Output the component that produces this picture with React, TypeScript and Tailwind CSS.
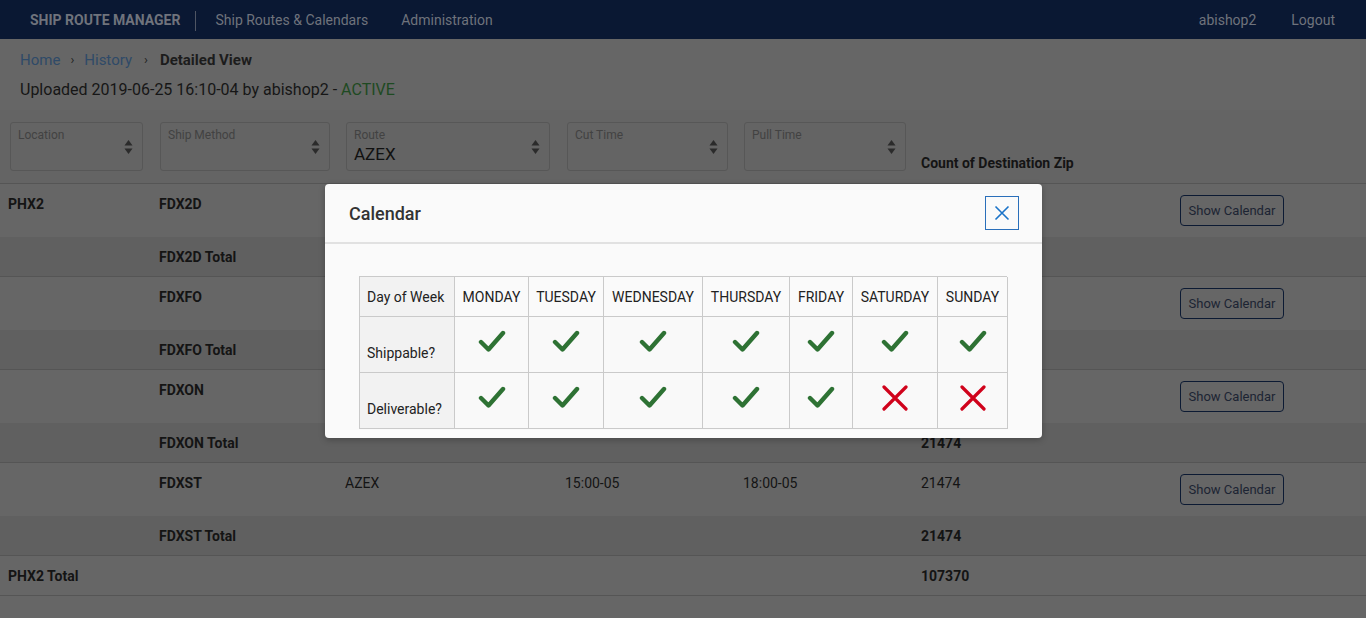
import React from "react";

const font = { fontFamily: "Roboto, 'Noto Sans', 'Liberation Sans', sans-serif" };

function UpDown() {
  return (
    <svg width="9" height="16" viewBox="0 0 9 16" className="shrink-0">
      <path d="M4.5 1 L8.5 6.5 L0.5 6.5 Z" fill="#2b2b2b" />
      <path d="M4.5 15 L8.5 9.5 L0.5 9.5 Z" fill="#2b2b2b" />
    </svg>
  );
}

function Check() {
  return (
    <svg width="28" height="23" viewBox="0 0 28 23">
      <path d="M3 12 L10.5 19.5 L25 3" fill="none" stroke="#2e7234" strokeWidth="4.4" strokeLinecap="round" strokeLinejoin="round" />
    </svg>
  );
}

function Cross() {
  return (
    <svg width="26" height="26" viewBox="0 0 26 26">
      <path d="M2 2 L24 24 M24 2 L2 24" fill="none" stroke="#d0021b" strokeWidth="3.2" strokeLinecap="round" />
    </svg>
  );
}

function Select({ label, value, w }: { label: string; value?: string; w: string }) {
  return (
    <div className={`${w} h-[49px] border border-[#575757] rounded-[3px] flex items-center pl-[7px] pr-[9px]`}>
      <div className="flex-1 flex flex-col self-stretch pt-[4px]">
        <span className="text-[12px] leading-[16px] text-[#424242]">{label}</span>
        {value && <span className="text-[17px] leading-[22px] text-[#111]">{value}</span>}
      </div>
      <UpDown />
    </div>
  );
}

function ShowBtn() {
  return (
    <button className="w-[104px] h-[31px] border border-[#0c1a33] rounded-[4px] text-[13px] text-[#1c2433] flex items-center justify-center">
      Show Calendar
    </button>
  );
}

type Group = { loc?: string; method: string; route?: string; cut?: string; pull?: string; count?: string; total: string };

const groups: Group[] = [
  { loc: "PHX2", method: "FDX2D", total: "" },
  { method: "FDXFO", total: "" },
  { method: "FDXON", total: "21474" },
  { method: "FDXST", route: "AZEX", cut: "15:00-05", pull: "18:00-05", count: "21474", total: "21474" },
];

const cols = "grid grid-cols-[151px_186px_220px_178px_178px_259px_1fr] pl-[8px]";

export default function App() {
  const days = ["MONDAY", "TUESDAY", "WEDNESDAY", "THURSDAY", "FRIDAY", "SATURDAY", "SUNDAY"];
  const ship = [true, true, true, true, true, true, true];
  const deliv = [true, true, true, true, true, false, false];
  return (
    <div style={font} className="relative min-h-screen w-full bg-[#666666] overflow-hidden">
      {/* Navbar */}
      <div className="h-[39px] bg-[#0a1833] flex items-center pt-[2px] px-[30px] text-[14px] text-[#6f737c]">
        <span className="font-bold">SHIP ROUTE MANAGER</span>
        <span className="w-px h-[20px] bg-[#4f5563] ml-[15px] mr-[19px]" />
        <span>Ship Routes &amp; Calendars</span>
        <span className="ml-[33px]">Administration</span>
        <span className="ml-auto">abishop2</span>
        <span className="ml-[35px] mr-[1px]">Logout</span>
      </div>

      {/* Header */}
      <div className="px-[20px] pt-[9px] pb-[8px]">
        <div className="flex items-center text-[15px] leading-[24px]">
          <span className="text-[#2f4a68]">Home</span>
          <span className="mx-[10px] text-[#222] text-[13px]">›</span>
          <span className="text-[#2f4a68]">History</span>
          <span className="mx-[12px] text-[#222] text-[13px]">›</span>
          <span className="font-bold text-[#1c1c1c]">Detailed View</span>
        </div>
        <div className="text-[16px] leading-[24px] mt-[6px] text-[#161616]">
          Uploaded 2019-06-25 16:10-04 by abishop2 - <span className="text-[#1e4a22]">ACTIVE</span>
        </div>
      </div>

      {/* Filter bar */}
      <div className="h-[74px] bg-[#646464] border-b border-[#555] flex items-start pl-[10px] pt-[12px]">
        <Select label="Location" w="w-[133px]" />
        <div className="w-[17px]" />
        <Select label="Ship Method" w="w-[170px]" />
        <div className="w-[16px]" />
        <Select label="Route" value="AZEX" w="w-[204px]" />
        <div className="w-[17px]" />
        <Select label="Cut Time" w="w-[161px]" />
        <div className="w-[16px]" />
        <Select label="Pull Time" w="w-[162px]" />
        <div className="ml-[15px] self-end mb-[10px] text-[14px] font-bold text-[#141414] leading-[20px]">
          Count of Destination Zip
        </div>
      </div>

      {/* Rows */}
      {groups.map((g) => (
        <div key={g.method} className="border-b border-[#555]">
          <div className={`${cols} h-[53px] text-[14px] leading-[20px] text-[#141414] pt-[10px]`}>
            <span className="font-bold">{g.loc ?? ""}</span>
            <span className="font-bold">{g.method}</span>
            <span>{g.route ?? ""}</span>
            <span>{g.cut ?? ""}</span>
            <span>{g.pull ?? ""}</span>
            <span>{g.count ?? ""}</span>
            <div className="mt-[1px]">
              <ShowBtn />
            </div>
          </div>
          <div className={`${cols} h-[39px] bg-[#606060] items-center text-[14px] leading-[20px] font-bold text-[#141414]`}>
            <span />
            <span>{g.method} Total</span>
            <span />
            <span />
            <span />
            <span>{g.total}</span>
            <span />
          </div>
        </div>
      ))}
      <div className="border-b border-[#555]">
        <div className={`${cols} h-[39px] items-center text-[14px] leading-[20px] font-bold text-[#141414]`}>
          <span>PHX2 Total</span>
          <span />
          <span />
          <span />
          <span />
          <span>107370</span>
          <span />
        </div>
      </div>

      {/* Modal */}
      <div className="absolute left-[325px] top-[184px] w-[717px] h-[254px] bg-[#fafafa] rounded-[4px] shadow-[0_2px_6px_rgba(0,0,0,0.25)]">
        <div className="h-[60px] border-b-2 border-[#e1e1e1] flex items-center pl-[24px] pr-[23px]">
          <span className="text-[18px] font-medium text-[#333]">Calendar</span>
          <button className="ml-auto w-[34px] h-[34px] border border-[#2a6fba] flex items-center justify-center bg-[#fafafa]">
            <svg width="18" height="18" viewBox="0 0 18 18">
              <path d="M2.5 2.5 L15.5 15.5 M15.5 2.5 L2.5 15.5" stroke="#1a73c8" strokeWidth="1.6" fill="none" />
            </svg>
          </button>
        </div>
        <div className="pl-[34px] pt-[32px]">
          <div className="grid grid-cols-[95px_74px_75px_99px_87px_63px_85px_70px] w-[648px] border-l border-t border-[#cacaca] text-[14px] leading-[20px] text-[#222]">
            <div className="h-[40px] border-r border-b border-[#cacaca] bg-[#f2f2f2] flex items-center px-[7px]">Day of Week</div>
            {days.map((d) => (
              <div key={d} className="h-[40px] border-r border-b border-[#cacaca] bg-[#fafafa] flex items-center justify-center">
                {d}
              </div>
            ))}
            <div className="h-[56px] border-r border-b border-[#cacaca] bg-[#f2f2f2] flex items-end px-[7px] pb-[9px]">Shippable?</div>
            {ship.map((v, i) => (
              <div key={"s" + i} className="h-[56px] border-r border-b border-[#cacaca] bg-[#f9f9f9] flex justify-center pt-[13px]">
                {v ? <Check /> : <div className="pt-[1px]"><Cross /></div>}
              </div>
            ))}
            <div className="h-[56px] border-r border-b border-[#cacaca] bg-[#f2f2f2] flex items-end px-[7px] pb-[9px]">Deliverable?</div>
            {deliv.map((v, i) => (
              <div key={"d" + i} className="h-[56px] border-r border-b border-[#cacaca] bg-[#f9f9f9] flex justify-center pt-[13px]">
                {v ? <Check /> : <div className="-mt-[1px]"><Cross /></div>}
              </div>
            ))}
          </div>
        </div>
      </div>
    </div>
  );
}
